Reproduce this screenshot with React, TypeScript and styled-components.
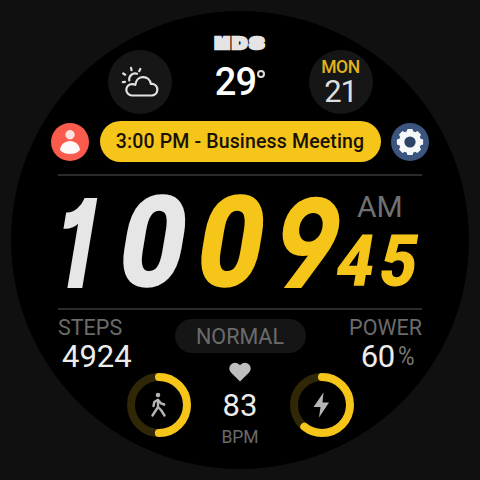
import React from "react";
import styled, { createGlobalStyle } from "styled-components";

const yellow = "#f6c51a";

const Global = createGlobalStyle`
  body { margin: 0; background: #101010; font-family: Roboto, "Liberation Sans", sans-serif; }
`;

const Screen = styled.main`
  box-sizing: border-box;
  width: 480px;
  height: 480px;
  padding: 11px 0 0 11px;
  background: #101010;
  overflow: hidden;
`;

const Face = styled.section`
  box-sizing: border-box;
  width: 458px;
  height: 458px;
  padding-top: 24px;
  border-radius: 50%;
  background: #000;
  display: flex;
  flex-direction: column;
  align-items: center;
`;

const Header = styled.header`
  display: grid;
  grid-template-columns: 64px 137px 64px;
  height: 86px;
`;

const Disc = styled.div`
  width: 64px;
  height: 64px;
  margin-top: 14.5px;
  border-radius: 50%;
  background: #161616;
  display: flex;
  flex-direction: column;
  align-items: center;
  justify-content: center;
`;

const Center = styled.div`
  display: flex;
  flex-direction: column;
  align-items: center;
`;

const Text = styled.span<{ $size: number; $line: number; $color?: string; $weight?: number; $track?: number }>`
  display: block;
  white-space: nowrap;
  font-size: ${(p) => p.$size}px;
  line-height: ${(p) => p.$line}px;
  color: ${(p) => p.$color ?? "#ececec"};
  font-weight: ${(p) => p.$weight ?? 400};
  letter-spacing: ${(p) => p.$track ?? 0}px;
`;

const Percent = styled(Text)`
  transform: scaleX(0.9);
  transform-origin: left;
  margin-right: -3px;
`;

const Temperature = styled.div`
  display: flex;
  align-items: flex-start;
  margin-top: 11px;
`;

const Degree = styled.i`
  width: 4px;
  height: 4px;
  margin: 6px 0 0 1px;
  border: 2px solid #ddd;
  border-radius: 50%;
`;

const Agenda = styled.div`
  display: flex;
  align-items: center;
  justify-content: space-between;
  width: 378px;
  height: 41px;
  margin-bottom: 12px;
`;

const Event = styled.div`
  width: 281px;
  height: 41px;
  border-radius: 21px;
  background: ${yellow};
  display: flex;
  align-items: center;
  justify-content: center;
`;

const Rule = styled.hr`
  width: 364px;
  height: 2px;
  margin: 0;
  border: 0;
  background: #2b2b2b;
`;

const Clock = styled.div`
  display: flex;
  width: 364px;
  height: 132px;
`;

const Digit = styled.span<{ $w: number; $h: number; $size: number; $sx: number; $color?: string; $font?: string; $weight?: number; $stroke?: number; $shift?: number }>`
  display: flex;
  justify-content: center;
  width: ${(p) => p.$w}px;
  height: ${(p) => p.$h}px;
  font-family: ${(p) => p.$font ?? "Roboto"}, "Liberation Sans", sans-serif;
  font-weight: ${(p) => p.$weight ?? 700};
  font-size: ${(p) => p.$size}px;
  line-height: ${(p) => p.$h}px;
  color: ${(p) => p.$color ?? yellow};
  -webkit-text-stroke: ${(p) => p.$stroke ?? 0}px ${(p) => p.$color ?? yellow};
  font-feature-settings: "cv01", "cv04", "ss01";
  transform: translateX(${(p) => p.$shift ?? 0}px) skewX(-9.5deg) scaleX(${(p) => p.$sx});
`;

const BigDigits = styled.div`
  display: grid;
  grid-template-columns: 63px 78px 78px 66px;
  padding-top: 21px;
`;

const Side = styled.div`
  display: flex;
  flex-direction: column;
  padding-top: 16px;
  margin-left: 14px;
`;

const Seconds = styled.div`
  display: flex;
  gap: 7px;
  margin: 13px 0 0 -19px;
`;

const Stats = styled.div`
  display: grid;
  grid-template-columns: 67px 230px 67px;
  width: 364px;
  height: 140px;
`;

const Stat = styled.div<{ $right?: boolean }>`
  padding-top: 6px;
  display: flex;
  flex-direction: column;
  align-items: ${(p) => (p.$right ? "flex-end" : "flex-start")};
`;

const Value = styled.div<{ $left?: number; $rightPad?: number }>`
  display: flex;
  align-items: center;
  gap: 3px;
  padding-left: ${(p) => p.$left ?? 0}px;
  padding-right: ${(p) => p.$rightPad ?? 0}px;
`;

const Middle = styled.div`
  display: flex;
  flex-direction: column;
  align-items: center;
  padding-top: 9px;
`;

const Mode = styled.div`
  width: 131px;
  height: 34px;
  border-radius: 17px;
  background: #151515;
  display: flex;
  justify-content: center;
`;

const Gauges = styled.div`
  display: grid;
  grid-template-columns: 64px 99px 64px;
  width: 227px;
  margin-top: 9px;
`;

const GaugeBox = styled.div`
  padding-top: 11px;
  height: 64px;
`;

const Heart = styled.div`
  display: flex;
  flex-direction: column;
  align-items: center;
`;

function Gauge({ value, children }: { value: number; children: React.ReactNode }) {
  const length = 2 * Math.PI * 28;
  return (
    <GaugeBox>
      <svg width="64" height="64" viewBox="0 0 64 64" fill="none">
        <circle cx="32" cy="32" r="28" stroke="#302706" strokeWidth="8" />
        <circle cx="32" cy="32" r="28" stroke={yellow} strokeWidth="8" strokeLinecap="round"
          strokeDasharray={`${length * value} ${length}`} transform="rotate(-90 32 32)" />
        {children}
      </svg>
    </GaugeBox>
  );
}

const Brand = () => (
  <svg width="54" height="18" viewBox="0 0 54 18" overflow="visible">
    <g fontFamily="Inter" fontWeight="900" fontSize="16" fill="#e4e4e4" stroke="#e4e4e4" strokeWidth="2.600" strokeLinejoin="miter">
      <text x="1.800" y="13.900" textLength="15" lengthAdjust="spacingAndGlyphs">M</text>
      <text x="19.200" y="13.900" textLength="14.800" lengthAdjust="spacingAndGlyphs">D</text>
      <text x="36.600" y="13.900" textLength="14.500" lengthAdjust="spacingAndGlyphs">S</text>
    </g>
  </svg>
);

const Weather = () => (
  <svg width="40" height="34" viewBox="0 0 40 34" fill="none" stroke="#e2e2e2" strokeWidth="2.200" strokeLinecap="round" strokeLinejoin="round">
    <path d="M12 30.500h19.500a5.900 5.900 0 0 0 1-11.700h-1.700a7.700 7.700 0 0 0-15.200-.3q-.2.800-.2 1.300-1-.7-3.400-.7a5.700 5.700 0 0 0 0 11.400Z" />
    <path d="M9.300 15.500a6 6 0 0 1 7.800-6.800M3.200 8.500l2 1.200M2.800 17.200l2.200-.3M11 2.800l.6 2.400M20.300 4l-1.100 2.200" />
  </svg>
);

const Person = () => (
  <svg width="38" height="38" viewBox="0 0 38 38">
    <circle cx="19" cy="19" r="19" fill="#fb5b4d" />
    <circle cx="19" cy="11.700" r="4.700" fill="#fee0dc" />
    <path d="M9 27c.5-5.200 4.700-9 10-9s9.500 3.800 10 9c-2.200 2.500-5.600 4-10 4s-7.800-1.500-10-4Z" fill="#fffaf7" />
  </svg>
);

const Gear = () => (
  <svg width="38" height="38" viewBox="0 0 38 38">
    <circle cx="19" cy="19" r="19" fill="#3b557f" />
    <g fill="#f6f7f9">
      <circle cx="19" cy="19" r="11" />
      {[0, 45, 90, 135, 180, 225, 270, 315].map((a) => (
        <path key={a} d="M15.600 9.500l.6-3q.2-.6 1-.6h3.600q.8 0 1 .6l.6 3Z" transform={`rotate(${a} 19 19)`} />
      ))}
    </g>
    <circle cx="19" cy="19" r="5.600" fill="#2c4268" />
  </svg>
);

export default function App() {
  return (
    <>
      <Global />
      <Screen>
        <Face>
          <Header>
            <Disc><Weather /></Disc>
            <Center>
              <Brand />
              <Temperature>
                <Text $size={38} $line={36} $weight={500} $color="#fff" $track={-0.8}>29</Text>
                <Degree />
              </Temperature>
            </Center>
            <Disc>
              <Text $size={17.500} $line={20} $weight={500} $color="#e2b41c" $track={-0.4}>MON</Text>
              <Text $size={31} $line={29} $color="#dedede" $track={-1.200}>21</Text>
            </Disc>
          </Header>
          <Agenda>
            <Person />
            <Event><Text $size={19.500} $line={41} $weight={500} $color="#171203" $track={0.15}>3:00 PM - Business Meeting</Text></Event>
            <Gear />
          </Agenda>
          <Rule />
          <Clock>
            <BigDigits>
              <Digit $w={48} $h={92} $size={121} $sx={0.74} $font="Inter" $stroke={2} $shift={-6} $color="#e6e6e6">1</Digit>
              <Digit $w={66} $h={92} $size={124} $sx={0.91} $stroke={3} $color="#e6e6e6">0</Digit>
              <Digit $w={66} $h={92} $size={124} $sx={0.91} $stroke={3}>0</Digit>
              <Digit $w={66} $h={92} $size={121} $sx={0.85} $font="Inter" $shift={-1.500} $stroke={2}>9</Digit>
            </BigDigits>
            <Side>
              <Text $size={30} $line={30} $color="#707070">AM</Text>
              <Seconds>
                <Digit $w={36} $h={52} $size={70} $sx={0.91} $stroke={1.500}>4</Digit>
                <Digit $w={36} $h={52} $size={70} $sx={0.91} $stroke={1.500}>5</Digit>
              </Seconds>
            </Side>
          </Clock>
          <Rule />
          <Stats>
            <Stat>
              <Text $size={21.500} $line={24} $color="#6b6b6b">STEPS</Text>
              <Value $left={4}><Text $size={31} $line={34}>4924</Text></Value>
            </Stat>
            <Middle>
              <Mode><Text $size={21.500} $line={35} $color="#6b6b6b">NORMAL</Text></Mode>
              <Gauges>
                <Gauge value={0.5}>
                  <g stroke="#b5b5b5" strokeWidth="2.400" strokeLinecap="round" strokeLinejoin="round">
                    <circle cx="31" cy="22" r="2.300" fill="#b5b5b5" stroke="none" />
                    <path d="M31 27v7l-5.500 8.500M31 34l3 3 3.500 5.500M26.500 33l.8-4 3.700-2.200 3 3.600 3.200 1.100" />
                  </g>
                </Gauge>
                <Heart>
                  <svg width="22" height="20" viewBox="0 0 22 20"><path d="M11 19.500L2.200 10.800A5.700 5.700 0 0 1 2 2.500 5.600 5.600 0 0 1 10 2.300l1 1 1-1a5.600 5.600 0 0 1 8 .2 5.700 5.700 0 0 1-.2 8.300Z" fill="#bfbfbf" /></svg>
                  <Text $size={31} $line={48}>83</Text>
                  <Text $size={17.500} $line={14} $color="#6b6b6b">BPM</Text>
                </Heart>
                <Gauge value={0.608}><path d="M33.500 19.500L23.500 34h7L29 44.500 39 29.500h-6.500Z" fill="#b5b5b5" /></Gauge>
              </Gauges>
            </Middle>
            <Stat $right>
              <Text $size={21.500} $line={24} $color="#6b6b6b">POWER</Text>
              <Value $rightPad={9}><Text $size={31} $line={34} $track={-0.5}>60</Text><Percent $size={25} $line={34} $color="#777">%</Percent></Value>
            </Stat>
          </Stats>
        </Face>
      </Screen>
    </>
  );
}
